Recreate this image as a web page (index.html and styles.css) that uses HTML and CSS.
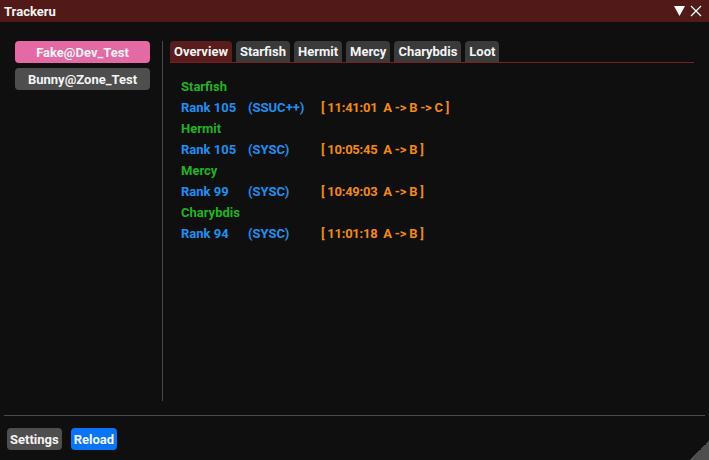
FILE: index.html
```html
<!DOCTYPE html>
<html>
<head>
<meta charset="utf-8">
<link rel="stylesheet" href="styles.css">
</head>
<body>
<div class="window">
  <div class="titlebar">
    <span class="title">Trackeru</span>
    <div class="title-icons">
      <svg width="11" height="10" viewBox="0 0 11 10"><polygon points="0,0 11,0 5.5,10" fill="#fff"/></svg>
      <svg width="12" height="12" viewBox="0 0 12 12"><path d="M1 1 L11 11 M11 1 L1 11" stroke="#fff" stroke-width="1.3"/></svg>
    </div>
  </div>
  <div class="main">
    <div class="sidebar">
      <div class="account active">Fake@Dev_Test</div>
      <div class="account">Bunny@Zone_Test</div>
    </div>
    <div class="panel">
      <div class="tabs">
        <div class="tab active">Overview</div>
        <div class="tab">Starfish</div>
        <div class="tab">Hermit</div>
        <div class="tab">Mercy</div>
        <div class="tab">Charybdis</div>
        <div class="tab">Loot</div>
      </div>
      <div class="content">
        <div class="name">Starfish</div>
        <div class="row"><span class="rank">Rank 105</span><span class="cls">(SSUC++)</span><span class="time">[ 11:41:01&nbsp; A -&gt; B -&gt; C ]</span></div>
        <div class="name">Hermit</div>
        <div class="row"><span class="rank">Rank 105</span><span class="cls">(SYSC)</span><span class="time">[ 10:05:45&nbsp; A -&gt; B ]</span></div>
        <div class="name">Mercy</div>
        <div class="row"><span class="rank">Rank 99</span><span class="cls">(SYSC)</span><span class="time">[ 10:49:03&nbsp; A -&gt; B ]</span></div>
        <div class="name">Charybdis</div>
        <div class="row"><span class="rank">Rank 94</span><span class="cls">(SYSC)</span><span class="time">[ 11:01:18&nbsp; A -&gt; B ]</span></div>
      </div>
    </div>
  </div>
  <div class="footer">
    <div class="btn settings">Settings</div>
    <div class="btn reload">Reload</div>
  </div>
  <div class="grip"></div>
</div>
</body>
</html>
```
FILE: styles.css
```css
* { box-sizing: border-box; }
html, body { margin: 0; padding: 0; }
body {
  width: 709px;
  height: 460px;
  overflow: hidden;
  background: #0f0f0f;
  font-family: "Roboto", sans-serif;
  font-weight: 700;
  font-size: 13px;
  color: #f4f4f4;
}
.window {
  position: relative;
  width: 709px;
  height: 460px;
  display: flex;
  flex-direction: column;
}
.titlebar {
  height: 22px;
  background: #521919;
  display: flex;
  align-items: center;
  justify-content: space-between;
  padding: 0 7px 0 4px;
}
.title-icons {
  display: flex;
  align-items: center;
  gap: 5px;
}
.main {
  display: flex;
  padding-top: 19px;
  height: 379px;
}
.sidebar {
  width: 162px;
  padding-left: 15px;
  padding-right: 12px;
  display: flex;
  flex-direction: column;
  gap: 5px;
}
.account {
  height: 22px;
  border-radius: 4px;
  background: #4e4e4e;
  display: flex;
  align-items: center;
  justify-content: center;
}
.account.active { background: #e46aa6; }
.panel {
  flex: 1;
  border-left: 1px solid #4a4a4a;
  padding-left: 7px;
  padding-right: 15px;
  height: 360px;
}
.tabs {
  display: flex;
  gap: 4px;
  border-bottom: 1px solid #7a2020;
  height: 22px;
}
.tab {
  height: 21px;
  padding: 0 4px;
  border-radius: 4px 4px 0 0;
  background: #3a3a3a;
  display: flex;
  align-items: center;
}
.tab.active { background: #5a1c1c; }
.content {
  padding-top: 13px;
  padding-left: 11px;
}
.name, .row {
  height: 21px;
  line-height: 21px;
  white-space: nowrap;
}
.name { color: #1fb41f; }
.row { display: flex; }
.rank { color: #1e8ff0; width: 67px; }
.cls { color: #1e8ff0; width: 73px; }
.time { color: #f08a14; letter-spacing: -0.25px; }
.footer {
  margin: 14px 4px 0;
  border-top: 1px solid #4a4a4a;
  padding: 12px 3px 0;
  display: flex;
  gap: 9px;
}
.btn {
  height: 22px;
  padding: 0 3px;
  border-radius: 4px;
  display: flex;
  align-items: center;
}
.settings { background: #4e4e4e; }
.reload { background: #0a74f7; }
.grip {
  position: absolute;
  right: 0;
  bottom: 0;
  width: 19px;
  height: 19px;
  background: linear-gradient(135deg, transparent 50%, #4e4e4e 50%);
}
```
